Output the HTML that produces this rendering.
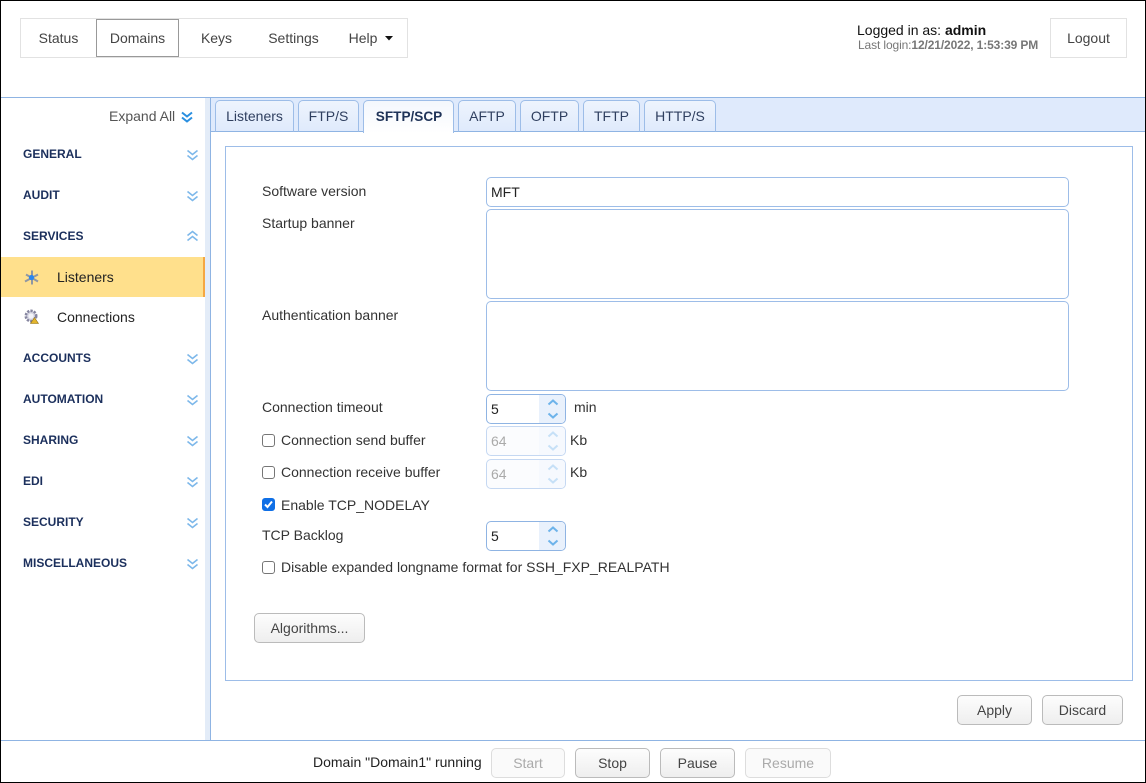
<!DOCTYPE html>
<html><head><meta charset="utf-8"><style>
html,body{margin:0;padding:0;background:#fff}
body{width:1146px;height:783px;position:relative;overflow:hidden;font-family:"Liberation Sans",sans-serif;font-size:14px;color:#333}
.a,.t,.b,.i,.tab,.sec,.ch,.cb,.sp{position:absolute;box-sizing:border-box}
.t{white-space:nowrap;line-height:16px}
.nav{color:#444;text-align:center;line-height:38px;top:19px;height:38px;position:absolute}
.tab{top:100px;height:32px;border:1px solid #9dbde8;border-bottom:1px solid #8fb4e3;border-radius:5px 5px 0 0;background:linear-gradient(#eef4fd,#dfeafc);text-align:center;line-height:30px;color:#2f3f5f}
.tab.on{background:linear-gradient(#f3f7fd,#fff);border-bottom:none;height:33px;font-weight:bold;font-size:13.6px;padding-left:1px;line-height:31px;color:#1f3358;top:100px;z-index:3}
.sec{left:23px;font-weight:bold;font-size:12px;color:#1b2f5c;line-height:14px}
.ch{left:185.5px}
.i{left:486px;width:583px;border:1px solid #9dbde8;border-radius:5px;background:#fff}
.sp{left:486px;width:80px;height:30px;border:1px solid #8fb4e3;border-radius:5px;background:#fff;overflow:hidden;color:#222;line-height:28px;padding-left:4px}
.sp:before{content:"";position:absolute;right:0;top:0;bottom:0;width:26px;background:#e9f1fc}
.sp svg{position:absolute;left:53px;top:0}
.sp.d{border-color:#c5d8f2;color:#aaa;background:#fbfcfe}
.sp.d:before{background:#f6f9fe}
.sp.d svg{opacity:.35}
.cb{left:262px;width:13px;height:13px;border:1px solid #767676;border-radius:3px;background:#fff}
.b{height:30px;border:1px solid #bbb;border-radius:5px;background:linear-gradient(#fdfdfd,#eee);text-align:center;line-height:28px;color:#444}
.b.d{border-color:#ddd;color:#aaa;background:#fafafa}
</style></head><body>
<div class="a" style="left:0;top:0;width:1146px;height:783px;border:1px solid #000;z-index:20;pointer-events:none"></div>

<div class="a" style="left:20px;top:18px;width:388px;height:40px;border:1px solid #e2e2e2"></div>
<div class="nav" style="left:21px;width:75px">Status</div>
<div class="a" style="left:96px;top:19px;width:83px;height:38px;border:1px solid #999"></div>
<div class="nav" style="left:96px;width:83px">Domains</div>
<div class="nav" style="left:179px;width:75px">Keys</div>
<div class="nav" style="left:254px;width:79px">Settings</div>
<div class="nav" style="left:333px;width:60px">Help</div>
<svg class="a" style="left:385px;top:36px" width="8" height="5"><path d="M0 0h8l-4 4.500z" fill="#111"/></svg>

<div class="t" style="left:857px;top:22px;color:#111">Logged in as: <b>admin</b></div>
<div class="t" style="left:858px;top:37px;font-size:12px;color:#777;letter-spacing:-.12px">Last login:<b>12/21/2022, 1:53:39 PM</b></div>
<div class="a" style="left:1050px;top:18px;width:77px;height:40px;border:1px solid #e2e2e2;text-align:center;line-height:38px;color:#444">Logout</div>

<div class="a" style="left:1px;top:97px;width:1144px;height:1px;background:#8fb4e3"></div>

<!-- Sidebar -->
<div class="a" style="left:205px;top:98px;width:5px;height:642px;background:#e3ecf8"></div>
<div class="a" style="left:210px;top:98px;width:1px;height:642px;background:#8fb4e3"></div>
<div class="t" style="left:109px;top:108px;color:#555">Expand All</div>
<svg class="a" style="left:181px;top:111px" width="12" height="12" fill="none" stroke="#2a8fe0" stroke-width="2"><path d="M1 1.500l5 4 5-4M1 6.500l5 4 5-4"/></svg>

<div class="sec" style="top:147px">GENERAL</div>
<div class="sec" style="top:188px">AUDIT</div>
<div class="sec" style="top:229px">SERVICES</div>
<div class="sec" style="top:351px">ACCOUNTS</div>
<div class="sec" style="top:392px">AUTOMATION</div>
<div class="sec" style="top:433px">SHARING</div>
<div class="sec" style="top:474px">EDI</div>
<div class="sec" style="top:515px">SECURITY</div>
<div class="sec" style="top:556px">MISCELLANEOUS</div>

<svg class="ch" style="top:149px" width="13" height="12" fill="none" stroke="#7db8ea" stroke-width="1.600"><path d="M1.500 1.500l5 4 5-4M1.500 6.500l5 4 5-4"/></svg>
<svg class="ch" style="top:190px" width="13" height="12" fill="none" stroke="#7db8ea" stroke-width="1.600"><path d="M1.500 1.500l5 4 5-4M1.500 6.500l5 4 5-4"/></svg>
<svg class="ch" style="top:230px" width="13" height="12" fill="none" stroke="#7db8ea" stroke-width="1.600"><path d="M1.500 5.500l5-4 5 4M1.500 10.500l5-4 5 4"/></svg>
<svg class="ch" style="top:353px" width="13" height="12" fill="none" stroke="#7db8ea" stroke-width="1.600"><path d="M1.500 1.500l5 4 5-4M1.500 6.500l5 4 5-4"/></svg>
<svg class="ch" style="top:394px" width="13" height="12" fill="none" stroke="#7db8ea" stroke-width="1.600"><path d="M1.500 1.500l5 4 5-4M1.500 6.500l5 4 5-4"/></svg>
<svg class="ch" style="top:435px" width="13" height="12" fill="none" stroke="#7db8ea" stroke-width="1.600"><path d="M1.500 1.500l5 4 5-4M1.500 6.500l5 4 5-4"/></svg>
<svg class="ch" style="top:476px" width="13" height="12" fill="none" stroke="#7db8ea" stroke-width="1.600"><path d="M1.500 1.500l5 4 5-4M1.500 6.500l5 4 5-4"/></svg>
<svg class="ch" style="top:517px" width="13" height="12" fill="none" stroke="#7db8ea" stroke-width="1.600"><path d="M1.500 1.500l5 4 5-4M1.500 6.500l5 4 5-4"/></svg>
<svg class="ch" style="top:558px" width="13" height="12" fill="none" stroke="#7db8ea" stroke-width="1.600"><path d="M1.500 1.500l5 4 5-4M1.500 6.500l5 4 5-4"/></svg>

<div class="a" style="left:1px;top:257px;width:204px;height:40px;background:#ffe08c;border-right:2px solid #f5a742"></div>
<svg class="a" style="left:24px;top:270px" width="15" height="15"><path d="M8 0.500v14M1 11.500l6.500-3.500L14 4.500M2 4.500l6 3.500 6 3.500" stroke="#8f97a3" stroke-width="2" fill="none"/><circle cx="7.500" cy="7.500" r="2.600" fill="#2a86ee"/></svg>
<div class="t" style="left:57px;top:269px;color:#222">Listeners</div>
<svg class="a" style="left:24px;top:309px" width="15" height="15"><circle cx="7" cy="7" r="5.200" fill="#d4d4e2" stroke="#85859f" stroke-width="2.600" stroke-dasharray="2.200 1.200"/><circle cx="7" cy="7" r="2.600" fill="#f4f4f8"/><path d="M6.500 14.500l4-6 4 6z" fill="#e3b52c" stroke="#8a6a10" stroke-width=".6"/></svg>
<div class="t" style="left:57px;top:309px;color:#222">Connections</div>

<!-- Tabs -->
<div class="a" style="left:211px;top:98px;width:934px;height:33px;background:#dfeafc"></div>
<div class="a" style="left:211px;top:131px;width:934px;height:1px;background:#8fb4e3"></div>
<div class="tab" style="left:215px;width:79px">Listeners</div>
<div class="tab" style="left:298px;width:61px">FTP/S</div>
<div class="tab on" style="left:363px;width:91px">SFTP/SCP</div>
<div class="tab" style="left:458px;width:58px">AFTP</div>
<div class="tab" style="left:520px;width:59px">OFTP</div>
<div class="tab" style="left:583px;width:57px">TFTP</div>
<div class="tab" style="left:644px;width:72px">HTTP/S</div>

<!-- Panel -->
<div class="a" style="left:225px;top:146px;width:908px;height:535px;border:1px solid #9dbde8"></div>

<div class="t" style="left:262px;top:183px">Software version</div>
<div class="i" style="top:177px;height:30px;line-height:28px;padding-left:4px;color:#222">MFT</div>
<div class="t" style="left:262px;top:215px">Startup banner</div>
<div class="i" style="top:209px;height:90px"></div>
<div class="t" style="left:262px;top:307px">Authentication banner</div>
<div class="i" style="top:301px;height:90px"></div>

<div class="t" style="left:262px;top:399px">Connection timeout</div>
<div class="sp" style="top:394px">5<svg width="26" height="28" fill="none" stroke="#6db3ea" stroke-width="2"><path d="M8.500 9.500l4.500-4 4.500 4M8.500 18.500l4.500 4 4.500-4"/></svg></div>
<div class="t" style="left:574px;top:399px">min</div>

<div class="cb" style="top:434px"></div>
<div class="t" style="left:281px;top:432px">Connection send buffer</div>
<div class="sp d" style="top:426px">64<svg width="26" height="28" fill="none" stroke="#6db3ea" stroke-width="2"><path d="M8.500 9.500l4.500-4 4.500 4M8.500 18.500l4.500 4 4.500-4"/></svg></div>
<div class="t" style="left:570px;top:432px">Kb</div>

<div class="cb" style="top:466px"></div>
<div class="t" style="left:281px;top:464px">Connection receive buffer</div>
<div class="sp d" style="top:459px">64<svg width="26" height="28" fill="none" stroke="#6db3ea" stroke-width="2"><path d="M8.500 9.500l4.500-4 4.500 4M8.500 18.500l4.500 4 4.500-4"/></svg></div>
<div class="t" style="left:570px;top:464px">Kb</div>

<div class="cb" style="top:498px;background:#0f6fe6;border-color:#0f6fe6"><svg style="position:absolute;left:0;top:0" width="11" height="11" fill="none" stroke="#fff" stroke-width="2"><path d="M2 5.500l2.500 2.500 4.500-5.500"/></svg></div>
<div class="t" style="left:281px;top:497px">Enable TCP_NODELAY</div>

<div class="t" style="left:262px;top:527px">TCP Backlog</div>
<div class="sp" style="top:521px">5<svg width="26" height="28" fill="none" stroke="#6db3ea" stroke-width="2"><path d="M8.500 9.500l4.500-4 4.500 4M8.500 18.500l4.500 4 4.500-4"/></svg></div>

<div class="cb" style="top:561px"></div>
<div class="t" style="left:281px;top:559px">Disable expanded longname format for SSH_FXP_REALPATH</div>

<div class="b" style="left:254px;top:613px;width:111px">Algorithms...</div>
<div class="b" style="left:957px;top:695px;width:75px">Apply</div>
<div class="b" style="left:1042px;top:695px;width:81px">Discard</div>

<!-- Footer -->
<div class="a" style="left:1px;top:740px;width:1144px;height:1px;background:#8fb4e3"></div>
<div class="t" style="left:313px;top:754px;color:#222">Domain "Domain1" running</div>
<div class="b d" style="left:491px;top:748px;width:74px">Start</div>
<div class="b" style="left:575px;top:748px;width:75px">Stop</div>
<div class="b" style="left:660px;top:748px;width:75px">Pause</div>
<div class="b d" style="left:745px;top:748px;width:86px">Resume</div>
</body></html>
